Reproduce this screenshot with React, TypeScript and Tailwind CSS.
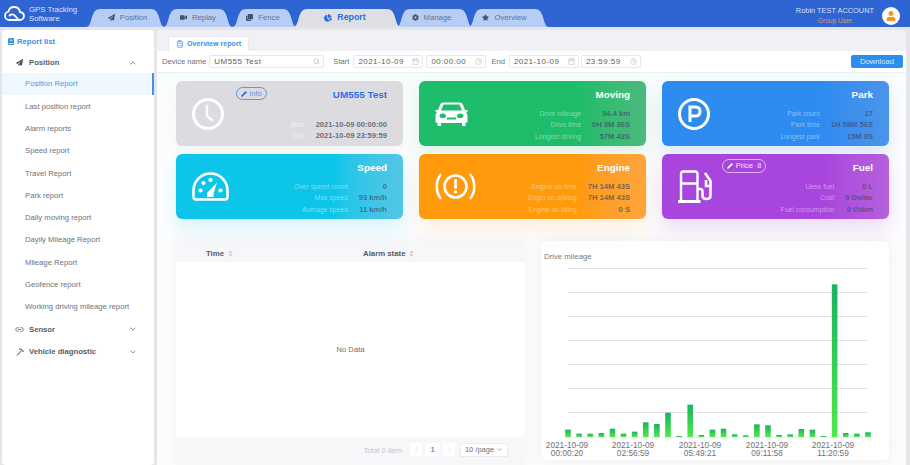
import React from 'react';
import { ChevronUp, ChevronDown, ChevronLeft, ChevronRight, Search, Calendar, Clock, Link2, ClipboardList, Pencil } from 'lucide-react';
import { FaPaperPlane, FaVideo, FaClone, FaChartPie, FaCog, FaStar, FaBook, FaUser } from 'react-icons/fa';

const font = "font-['Liberation_Sans',Arial,sans-serif]";

const tabs = [
  { label: 'Position', icon: FaPaperPlane, width: 79, cls: 'w-[79px] ml-0 pl-[4px]' },
  { label: 'Replay', icon: FaVideo, width: 70, cls: 'w-[70px] -ml-[2px]' },
  { label: 'Fence', icon: FaClone, width: 65, cls: 'w-[65px] -ml-[1px] pr-[3px]' },
  { label: 'Report', icon: FaChartPie, width: 108, cls: 'w-[108px] -ml-[4px] z-10 pr-[4px]', active: true },
  { label: 'Manage', icon: FaCog, width: 77, cls: 'w-[77px] -ml-[5px] pr-[6px]' },
  { label: 'Overview', icon: FaStar, width: 81, cls: 'w-[81px] -ml-[5px] pr-[8px]' },
];

const menu = [
  'Last position report',
  'Alarm reports',
  'Speed report',
  'Travel Report',
  'Park report',
  'Daily moving report',
  'Dayily Mileage Report',
  'Mileage Report',
  'Geofence report',
  'Working driving mileage report',
];

const bars = [584, 596, 596, 594, 581, 596, 590, 562, 567, 533, 603, 509, 600, 584, 581, 598, 601, 568, 571, 600, 598, 582, 584, 603, 148, 594, 596, 592];
const ticks = [
  { x: 26, time: '00:00:20' },
  { x: 92, time: '02:56:59' },
  { x: 159, time: '05:49:21' },
  { x: 226, time: '09:11:58' },
  { x: 292, time: '11:20:59' },
];

const TabShape = ({ w, fill }: { w: number; fill: string }) => (
  <svg className="absolute inset-0" width={w} height={18} viewBox={`0 0 ${w} 18`}>
    <path d={`M0 18 C3 18 4 15 5.500 10 C7 4 9 0 14 0 L${w - 14} 0 C${w - 9} 0 ${w - 7} 4 ${w - 5.500} 10 C${w - 4} 15 ${w - 3} 18 ${w} 18 Z`} fill={fill} />
  </svg>
);

const ClockIcon = () => (
  <svg width="32" height="32" viewBox="0 0 32 32" fill="none" stroke="#fff" strokeWidth="3" strokeLinecap="round">
    <circle cx="16" cy="16" r="14.500" />
    <path d="M15 8 V18 L20 22" strokeWidth="2.400" />
  </svg>
);

const CarIcon = () => (
  <svg width="33" height="24" viewBox="0 0 33 24" fill="#fff">
    <path
      fillRule="evenodd"
      d="M8 0.500 H25 C26.500 0.500 27.300 1.500 28 3 L30 8 H32.500 V10 H31 C32 11.500 32.500 12.500 32.500 14.500 V20.500 H30.500 V24 H27 V21 H6 V24 H2.500 V20.500 H0.500 V14.500 C0.500 12.500 1 11.500 2 10 H0.500 V8 H3 L5 3 C5.700 1.500 6.500 0.500 8 0.500 Z M8.500 2.500 L6 8.500 H27 L24.500 2.500 Z M8 11.500 C5.500 11.500 4.500 12.500 4.500 14 C4.500 15.500 6 16 8 16 C10 16 11 15.500 11 14 C11 13 10 11.500 8 11.500 Z M25 11.500 C23 11.500 22 13 22 14 C22 15.500 23 16 25 16 C27 16 28.500 15.500 28.500 14 C28.500 12.500 27.500 11.500 25 11.500 Z M12 15.500 V17.500 H21 V15.500 Z"
    />
  </svg>
);

const ParkIcon = () => (
  <svg width="32" height="32" viewBox="0 0 32 32" fill="none" stroke="#fff">
    <circle cx="16" cy="16" r="14.500" strokeWidth="3" />
    <path d="M12 24 V9 H17.500 C20.500 9 22 11 22 13.500 C22 16 20.500 18 17.500 18 H12" strokeWidth="3" />
  </svg>
);

const GaugeIcon = () => (
  <svg width="37" height="29" viewBox="0 0 37 29" fill="none">
    <path d="M1.500 18.500 A17 17 0 0 1 35.500 18.500 V25 A2.500 2.500 0 0 1 33 27.500 H4 A2.500 2.500 0 0 1 1.500 25 Z" stroke="#fff" strokeWidth="2.600" />
    <g fill="#fff">
      <circle cx="8.500" cy="18.500" r="2.100" />
      <circle cx="11.500" cy="11" r="2.100" />
      <circle cx="18.500" cy="8" r="2.100" />
      <circle cx="28.500" cy="18.500" r="2.100" />
      <path d="M15 21 L25 10.500 L21.500 22 L21.500 25 H15 Z" />
    </g>
  </svg>
);

const EngineIcon = () => (
  <svg width="41" height="27" viewBox="0 0 41 27" fill="none" stroke="#fff" strokeLinecap="round">
    <circle cx="20.500" cy="13.500" r="11" strokeWidth="2.600" />
    <path d="M5.500 2 C0.500 8 0.500 19 5.500 25" strokeWidth="2.600" />
    <path d="M35.500 2 C40.500 8 40.500 19 35.500 25" strokeWidth="2.600" />
    <path d="M20.500 7.500 V14.500" strokeWidth="2.800" />
    <circle cx="20.500" cy="18.800" r="1.600" fill="#fff" stroke="none" />
  </svg>
);

const FuelIcon = () => (
  <svg width="34" height="33" viewBox="0 0 34 33" fill="none" stroke="#fff" strokeWidth="2.400">
    <path d="M3 31 V4 C3 2.500 4 1.500 5.500 1.500 H17 C18.500 1.500 19.500 2.500 19.500 4 V31" />
    <path d="M3 13.500 H19.500" />
    <path d="M0 31.500 H22.500" strokeWidth="2.800" />
    <path d="M19.500 19 H22.500 C24 19 24.500 20 24.500 21.500 V25.500 C24.500 28 26 29 28.500 29 C31 29 32.500 28 32.500 25.500 V11 L27 3" strokeWidth="2.600" />
    <path d="M28 10 V16 H32" strokeWidth="2.600" />
  </svg>
);

type Row = [string, string];

const StatCard = ({ title, icon, rows, cls, titleCls = 'text-white', badge, labelCls = 'text-white/45', valueCls = 'text-[#3c4a68]/70', top = false }: {
  title: string;
  icon: React.ReactNode;
  rows: Row[];
  cls: string;
  titleCls?: string;
  badge?: React.ReactNode;
  labelCls?: string;
  valueCls?: string;
  top?: boolean;
}) => (
  <div className={`relative flex h-[65px] w-[227px] items-center rounded-[6px] pr-4 ${cls}`}>
    <div className="ml-[16px] shrink-0">{icon}</div>
    <div className="flex h-full flex-1 flex-col items-end">
      <div className={`mt-[8px] text-[9.900px] font-bold leading-[12px] ${titleCls}`}>{title}</div>
      <div className={`grid grid-cols-[auto_auto] items-baseline justify-end gap-x-[11px] text-right leading-[11.400px] ${top ? 'mt-[18px]' : 'mt-[7px]'}`}>
        {rows.map(([k, v]) => (
          <React.Fragment key={k}>
            <span className={`text-[6.800px] ${labelCls}`}>{k}</span>
            <span className={`text-[7.600px] font-bold ${valueCls}`}>{v}</span>
          </React.Fragment>
        ))}
      </div>
    </div>
    {badge}
  </div>
);

const Field = ({ cls, value, children }: { cls: string; value: string; children: React.ReactNode }) => (
  <div className={`flex h-[13.500px] items-center justify-between rounded-[2px] border border-[#e8e8ec] bg-white pl-[4px] pr-[3px] text-[8px] tracking-[0.45px] text-[#5a5e66] ${cls}`}>
    <span>{value}</span>
    {children}
  </div>
);

const App = () => {
  return (
    <div className={`flex h-[465px] w-[910px] flex-col overflow-hidden bg-[#e6e6ea] ${font}`}>
      {/* Header */}
      <div className="flex h-[27px] shrink-0 bg-[#2f64d3]">
        <div className="flex w-[86px] shrink-0 items-center pl-[4px]">
          <svg width="21" height="15" viewBox="0 0 21 15" fill="none" stroke="#fff" strokeWidth="1.800" strokeLinecap="round">
            <path d="M6 14 H15.500 C18 14 20 12.300 20 10 C20 7.800 18.200 6.200 16 6.200 C15.500 3 13 1 10 1 C7 1 5 3 4.500 5.500 C2.500 6 1 7.800 1 10 C1 12.300 3 14 5.500 14" />
            <path d="M5.500 9.500 C7 8 9.500 8 11 9.800 L14 13" />
          </svg>
          <div className="ml-[4px] text-[7.800px] leading-[9px] text-[#dbe5fb]">
            GPS Tracking<br />Software
          </div>
        </div>
        <div className="flex flex-1 items-end">
          {tabs.map(t => (
            <div key={t.label} className={`relative flex h-[18px] items-center justify-center ${t.cls}`}>
              <TabShape w={t.width} fill={t.active ? '#dedfe4' : '#b6cdf6'} />
              <span className={`relative flex items-center gap-[5px] ${t.active ? 'text-[8.800px] font-bold text-[#2b6fdc]' : 'text-[7.700px] text-[#65738e]'}`}>
                <t.icon className={t.active ? 'h-[8px] w-[8px] text-[#2b6fdc]' : 'h-[7px] w-[7px] text-[#46536b]'} />
                {t.label}
              </span>
            </div>
          ))}
        </div>
        <div className="flex flex-col items-center pt-[6px] text-[7.400px] leading-[9px]">
          <span className="text-[#d5e0f7]">Robin TEST ACCOUNT</span>
          <span className="mt-[1px] text-[6.600px] text-[#d79a5c]">Group User</span>
        </div>
        <div className="ml-[8px] mr-[10px] mt-[7px] flex h-[18px] w-[18px] items-center justify-center rounded-full bg-white">
          <FaUser className="h-[10px] w-[10px] text-[#f7931e]" />
        </div>
      </div>

      <div className="flex min-h-0 flex-1 pt-[3px]">
        {/* Sidebar */}
        <div className="ml-[2px] w-[152px] shrink-0 rounded-[4px] bg-white text-[7.700px] text-[#6b7280]">
          <div className="flex h-[22px] items-center gap-[3px] pl-[6px] pt-[1px] font-bold text-[#3d8fe4]">
            <FaBook className="h-[7px] w-[6px]" />
            Report list
          </div>
          <div className="flex h-[21px] items-center pl-[14px] pr-[17px] font-bold text-[#555c6b]">
            <FaPaperPlane className="mr-[6px] h-[7px] w-[7px] text-[#444b5a]" />
            <span className="flex-1">Position</span>
            <ChevronUp size={8} strokeWidth={2} />
          </div>
          <div className="flex h-[22.300px] items-center border-r-[2px] border-[#4a90e2] bg-[#eff8ff] pl-[23px] text-[#4e9be6]">Position Report</div>
          {menu.map(m => (
            <div key={m} className="flex h-[22.300px] items-center pl-[23px]">{m}</div>
          ))}
          <div className="flex h-[22.300px] items-center pl-[13px] pr-[17px] font-bold text-[#555c6b]">
            <Link2 size={9} className="mr-[5px] text-[#555c6b]" />
            <span className="flex-1">Sensor</span>
            <ChevronDown size={8} strokeWidth={2} />
          </div>
          <div className="flex h-[22.300px] items-center pl-[14px] pr-[17px] font-bold text-[#555c6b]">
            <svg width="8" height="8" viewBox="0 0 8 8" fill="none" stroke="#3f4654" strokeWidth="1" className="mr-[5px]">
              <path d="M1 7.500 L6 2.200" />
              <path d="M3 1 C5 1 6.500 1.500 7.500 4" />
            </svg>
            <span className="flex-1">Vehicle diagnostic</span>
            <ChevronDown size={8} strokeWidth={2} />
          </div>
        </div>

        {/* Main panel */}
        <div className="ml-[3px] mr-[4px] flex min-w-0 flex-1 flex-col overflow-hidden rounded-t-[4px] bg-white">
          <div className="flex h-[21px] shrink-0 items-end bg-[#f1f1f5] pl-[11px]">
            <div className="flex h-[15px] w-[81px] items-center justify-center gap-[3px] rounded-t-[2px] border border-b-0 border-[#e8e8ee] bg-white text-[7.100px] font-bold text-[#3d8fe4]">
              <ClipboardList size={8} />
              Overview report
            </div>
          </div>
          <div className="flex h-[22px] shrink-0 items-center border-b border-[#eeeef2] bg-white pl-[5px] pr-[3px] text-[7.600px] text-[#6b7078]">
            <span>Device name</span>
            <div className="ml-[3px] flex h-[13.500px] w-[115px] items-center justify-between rounded-[2px] border border-[#e8e8ec] pl-[4px] pr-[3px] text-[8px] tracking-[0.45px] text-[#5a5e66]">
              <span>UM555 Test</span>
              <Search size={7} className="text-[#a8acb4]" />
            </div>
            <span className="ml-[9px]">Start</span>
            <Field cls="ml-[4px] w-[70px]" value="2021-10-09"><Calendar size={7} className="text-[#b8bcc4]" /></Field>
            <Field cls="ml-[3px] w-[60px]" value="00:00:00"><Clock size={7} className="text-[#b8bcc4]" /></Field>
            <span className="ml-[5px]">End</span>
            <Field cls="ml-[4px] w-[70px]" value="2021-10-09"><Calendar size={7} className="text-[#b8bcc4]" /></Field>
            <Field cls="ml-[2px] w-[60px]" value="23:59:59"><Clock size={7} className="text-[#b8bcc4]" /></Field>
            <button className="ml-auto h-[13.500px] w-[52px] rounded-[2px] bg-[#2d8cf0] text-[7.700px] text-[#d8e8fb]">Download</button>
          </div>

          <div className="flex-1 bg-gradient-to-b from-[#f8fdfd] to-[#fdfdfe] to-[10%] pl-[19px] pt-[8px]">
            {/* Cards */}
            <div className="grid grid-cols-[227px_227px_227px] gap-x-[16px] gap-y-[8px]">
              <StatCard
                title="UM555 Test"
                icon={<ClockIcon />}
                titleCls="text-[#2a70ea]"
                cls="bg-[#dcdce0] shadow-[0_8px_18px_rgba(190,190,200,0.12)]"
                labelCls="text-white/60"
                valueCls="text-[#5a5e6a]/90"
                top
                rows={[['Start', '2021-10-09 00:00:00'], ['End', '2021-10-09 23:59:59']]}
                badge={
                  <span className="absolute left-[60px] top-[6px] flex h-[13px] w-[31px] items-center justify-center gap-[2px] rounded-full border border-[#5f94e8] text-[7.600px] text-[#5f94e8]">
                    <Pencil size={6} fill="#2a70ea" stroke="#2a70ea" />Info
                  </span>
                }
              />
              <StatCard
                title="Moving"
                icon={<CarIcon />}
                cls="bg-gradient-to-r from-[#1dbd6b] from-70% to-[#4ab97d] shadow-[0_8px_18px_rgba(29,189,107,0.16)]"
                rows={[['Drive mileage', '94.4 km'], ['Drive time', '0H 3M 36S'], ['Longest driving', '57M 43S']]}
              />
              <StatCard
                title="Park"
                icon={<ParkIcon />}
                cls="bg-gradient-to-r from-[#2e8bf0] from-70% to-[#4b94e9] shadow-[0_8px_18px_rgba(46,139,240,0.18)]"
                rows={[['Park count', '17'], ['Park time', '1H 58M 56S'], ['Longest park', '15M 8S']]}
              />
              <StatCard
                title="Speed"
                icon={<GaugeIcon />}
                cls="bg-gradient-to-r from-[#0cc5e9] from-70% to-[#52c6e6] shadow-[0_10px_20px_rgba(12,197,233,0.16)]"
                rows={[['Over speed count', '0'], ['Max speed', '93 km/h'], ['Average speed', '11 km/h']]}
              />
              <StatCard
                title="Engine"
                icon={<EngineIcon />}
                cls="bg-gradient-to-r from-[#ff9a0c] from-70% to-[#fea53c] shadow-[0_10px_20px_rgba(255,154,12,0.14)]"
                rows={[['Engine on time', '7H 14M 43S'], ['Engin on driving', '7H 14M 43S'], ['Engine on idling', '0 S']]}
              />
              <StatCard
                title="Fuel"
                icon={<FuelIcon />}
                cls="bg-gradient-to-r from-[#a845dd] from-70% to-[#b660dc] shadow-[0_10px_20px_rgba(168,69,221,0.18)]"
                rows={[['Uese fuel', '0 L'], ['Cost', '0 Dollar'], ['Fuel consumption', '0 l/hkm']]}
                badge={
                  <span className="absolute left-[60px] top-[5px] flex h-[13.500px] w-[44px] items-center justify-center gap-[3px] rounded-full border border-white/60 text-[7.600px] text-white/85">
                    <Pencil size={6} fill="#fff" stroke="#fff" />Price&nbsp;&nbsp;8
                  </span>
                }
              />
            </div>

            <div className="mt-[22px] flex items-start gap-[16px]">
              {/* Table */}
              <div className="h-[224px] w-[349px] shrink-0 bg-[#f7f7f9] shadow-[0_0_14px_rgba(200,200,210,0.2)]">
                <div className="mt-[4px] flex h-[17px] items-center text-[7.800px] font-bold text-[#565b69]">
                  <span className="ml-[30px] flex w-[157px] items-center gap-[4px]">Time <Sorter /></span>
                  <span className="flex items-center gap-[4px]">Alarm state <Sorter /></span>
                </div>
                <div className="flex h-[175px] items-center justify-center bg-white text-[7.700px] text-[#6b7078]">No Data</div>
                <div className="flex h-[28px] items-start justify-end pr-[17px] pt-[6px] text-[7.500px] text-[#c3c6cd]">
                  <span className="pt-[2px]">Total 0 item</span>
                  <span className="ml-[8px] flex h-[13px] w-[12px] items-center justify-center bg-white"><ChevronLeft size={7} /></span>
                  <span className="ml-[3px] flex h-[13px] w-[15px] items-center justify-center bg-white font-bold text-[#5b9be0]">1</span>
                  <span className="ml-[3px] flex h-[13px] w-[12px] items-center justify-center bg-white"><ChevronRight size={7} /></span>
                  <span className="ml-[5px] flex h-[13.500px] w-[48px] items-center justify-center gap-[2px] border border-[#ebebef] bg-white text-[#6b7078]">10 /page <ChevronDown size={7} /></span>
                </div>
              </div>

              {/* Chart */}
              <div className="h-[219px] w-[348px] shrink-0 rounded-[6px] bg-white shadow-[0_0_14px_rgba(190,190,200,0.25)]">
                <svg width="348" height="219" viewBox="0 0 348 219">
                  <defs>
                    <linearGradient id="bar" x1="0" y1="0" x2="0" y2="1">
                      <stop offset="0" stopColor="#18b262" />
                      <stop offset="1" stopColor="#52e84a" />
                    </linearGradient>
                  </defs>
                  <text x="3" y="18" fontSize="7.800" fill="#777b82">Drive mileage</text>
                  {[27, 51, 75, 99, 123, 147, 171].map(y => (
                    <line key={y} x1="27" x2="327" y1={y + 0.5} y2={y + 0.5} stroke="#e2e2e6" />
                  ))}
                  <line x1="24" x2="330" y1="196.500" y2="196.500" stroke="#eeeeee" />
                  {bars.map((top, i) => {
                    const y = top / 3 + 235 - 241;
                    return <rect key={i} x={27 + i * 11.11 - 2.8} y={y} width="5.600" height={196 - y} fill="url(#bar)" />;
                  })}
                  {ticks.map(t => (
                    <text key={t.time} textAnchor="middle" fontSize="8.300" fill="#6e7278">
                      <tspan x={t.x} y="207">2021-10-09</tspan>
                      <tspan x={t.x} y="214.500">{t.time}</tspan>
                    </text>
                  ))}
                </svg>
              </div>
            </div>
          </div>
        </div>
      </div>
    </div>
  );
};

const Sorter = () => (
  <svg width="5" height="7" viewBox="0 0 5 7" fill="#c0c3ca">
    <path d="M2.500 0.500 L4.500 2.800 H0.500 Z M2.500 6.500 L0.500 4.200 H4.500 Z" />
  </svg>
);

export default App;
